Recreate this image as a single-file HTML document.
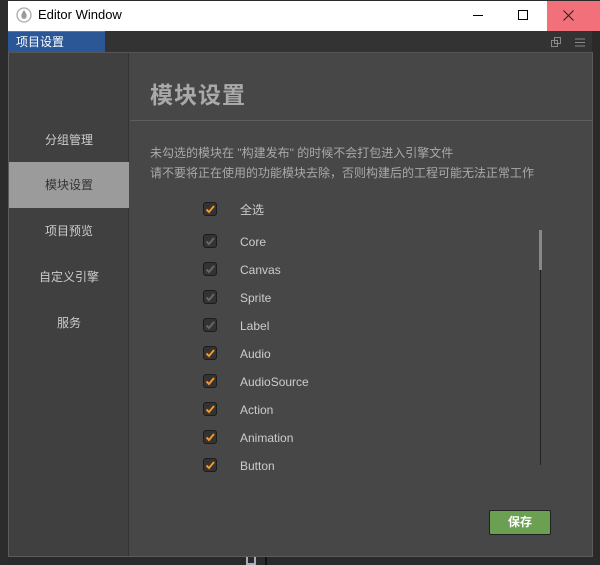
<!DOCTYPE html>
<html><head><meta charset="utf-8"><style>
*{margin:0;padding:0;box-sizing:border-box}
body{width:600px;height:565px;background:#2a2a2a;position:relative;overflow:hidden;font-family:"Liberation Sans","Noto Sans CJK SC",sans-serif}
.abs{position:absolute}
.title{left:8px;top:1px;width:592px;height:30px;background:#fff}
.close{left:547px;top:1px;width:53px;height:30px;background:#f1707a}
.tabbar{left:8px;top:31px;width:584px;height:21px;background:#333}
.tab{left:8px;top:31px;width:97px;height:21px;background:#2b5797;border-top:1px solid #3c7fd0;color:#fff;font-size:12px;line-height:20px;padding-left:8px}
.panel{left:8px;top:52px;width:585px;height:505px;background:#474747;border:1px solid #5c5c5c;border-top-color:#555}
.side{left:9px;top:53px;width:120px;height:503px;background:#404040;border-right:1px solid #333}
.nav{position:absolute;left:0;width:120px;height:46px;line-height:46px;text-align:center;font-size:12px;color:#ccc}
.sel{background:#9b9b9b;color:#333}
h1{position:absolute;left:150px;top:76px;font-size:23px;color:#a9a9a9;font-weight:bold;letter-spacing:1px}
.hl{left:130px;top:120px;width:462px;height:1px;background:#5e5e5e}
.desc{left:150px;top:143px;font-size:12px;color:#a9a9a9;line-height:20px}
.row{position:absolute;left:203px;height:16px;font-size:12px;color:#ccc}
.cb{position:absolute;left:0;top:0;width:14px;height:14px;border:1px solid #1c1c1c;border-radius:3px;background:#333}
.row span{position:absolute;left:37px;top:1px;line-height:15px;white-space:nowrap}
.btn{left:489px;top:510px;width:62px;height:25px;background:#6ba052;border:1px solid #222;border-radius:2px;color:#fff;font-weight:bold;font-size:12px;text-align:center;line-height:23px}
</style></head><body>
<div class="abs" style="left:0;top:0;width:8px;height:565px;background:#2c2c2c"></div>
<div class="abs title"></div>
<svg class="abs" style="left:16px;top:7px" width="16" height="16" viewBox="0 0 16 16"><circle cx="8" cy="8" r="7" fill="none" stroke="#aaa" stroke-width="1.3"/><path d="M8 3 C6 6 5 8 5.5 10 A2.6 2.6 0 0 0 10.5 10 C11 8 10 6 8 3Z" fill="#999"/></svg>
<div class="abs" style="left:38px;top:7px;font-size:13px;color:#000">Editor Window</div>
<div class="abs" style="left:473px;top:15px;width:10px;height:1px;background:#000"></div>
<div class="abs" style="left:518px;top:10px;width:10px;height:10px;border:1px solid #000"></div>
<div class="abs close"></div>
<svg class="abs" style="left:563px;top:10px" width="11" height="11"><path d="M0.5 0.5L10.5 10.5M10.5 0.5L0.5 10.5" stroke="#222" stroke-width="1"/></svg>
<div class="abs tabbar"></div>
<div class="abs tab">项目设置</div>
<svg class="abs" style="left:551px;top:37px" width="10" height="10"><rect x="0.5" y="3.5" width="6" height="6" fill="none" stroke="#888"/><rect x="3.5" y="0.5" width="6" height="6" fill="none" stroke="#888"/></svg>
<svg class="abs" style="left:575px;top:38px" width="10" height="9"><path d="M0 1h10M0 4.5h10M0 8h10" stroke="#888"/></svg>
<div class="abs panel"></div>
<div class="abs side">
<div class="nav" style="top:64px">分组管理</div>
<div class="nav sel" style="top:109px">模块设置</div>
<div class="nav" style="top:155px">项目预览</div>
<div class="nav" style="top:201px">自定义引擎</div>
<div class="nav" style="top:247px">服务</div>
</div>
<h1>模块设置</h1>
<div class="abs hl"></div>
<div class="abs desc">未勾选的模块在 "构建发布" 的时候不会打包进入引擎文件<br>请不要将正在使用的功能模块去除，否则构建后的工程可能无法正常工作</div>
<div class="row" style="top:202px"><div class="cb"><svg width="12" height="12" viewBox="0 0 12 12"><path d="M2.5 6.5L5 9L10 3" stroke="#f0952a" stroke-width="2" fill="none"/></svg></div><span style="top:1px">全选</span></div>
<div class="row" style="top:234px"><div class="cb"><svg width="12" height="12" viewBox="0 0 12 12"><path d="M2.5 6.5L5 9L10 3" stroke="#666" stroke-width="2" fill="none"/></svg></div><span>Core</span></div>
<div class="row" style="top:262px"><div class="cb"><svg width="12" height="12" viewBox="0 0 12 12"><path d="M2.5 6.5L5 9L10 3" stroke="#666" stroke-width="2" fill="none"/></svg></div><span>Canvas</span></div>
<div class="row" style="top:290px"><div class="cb"><svg width="12" height="12" viewBox="0 0 12 12"><path d="M2.5 6.5L5 9L10 3" stroke="#666" stroke-width="2" fill="none"/></svg></div><span>Sprite</span></div>
<div class="row" style="top:318px"><div class="cb"><svg width="12" height="12" viewBox="0 0 12 12"><path d="M2.5 6.5L5 9L10 3" stroke="#666" stroke-width="2" fill="none"/></svg></div><span>Label</span></div>
<div class="row" style="top:346px"><div class="cb"><svg width="12" height="12" viewBox="0 0 12 12"><path d="M2.5 6.5L5 9L10 3" stroke="#f0952a" stroke-width="2" fill="none"/></svg></div><span>Audio</span></div>
<div class="row" style="top:374px"><div class="cb"><svg width="12" height="12" viewBox="0 0 12 12"><path d="M2.5 6.5L5 9L10 3" stroke="#f0952a" stroke-width="2" fill="none"/></svg></div><span>AudioSource</span></div>
<div class="row" style="top:402px"><div class="cb"><svg width="12" height="12" viewBox="0 0 12 12"><path d="M2.5 6.5L5 9L10 3" stroke="#f0952a" stroke-width="2" fill="none"/></svg></div><span>Action</span></div>
<div class="row" style="top:430px"><div class="cb"><svg width="12" height="12" viewBox="0 0 12 12"><path d="M2.5 6.5L5 9L10 3" stroke="#f0952a" stroke-width="2" fill="none"/></svg></div><span>Animation</span></div>
<div class="row" style="top:458px"><div class="cb"><svg width="12" height="12" viewBox="0 0 12 12"><path d="M2.5 6.5L5 9L10 3" stroke="#f0952a" stroke-width="2" fill="none"/></svg></div><span>Button</span></div>
<div class="abs" style="left:540px;top:230px;width:1px;height:235px;background:#222"></div>
<div class="abs" style="left:539px;top:230px;width:3px;height:40px;background:#888"></div>
<div class="abs btn">保存</div>
<div class="abs" style="left:246px;top:557px;width:10px;height:8px;border:2px solid #aab;border-top:none"></div>
<div class="abs" style="left:265px;top:557px;width:2px;height:8px;background:#111"></div>
</body></html>
